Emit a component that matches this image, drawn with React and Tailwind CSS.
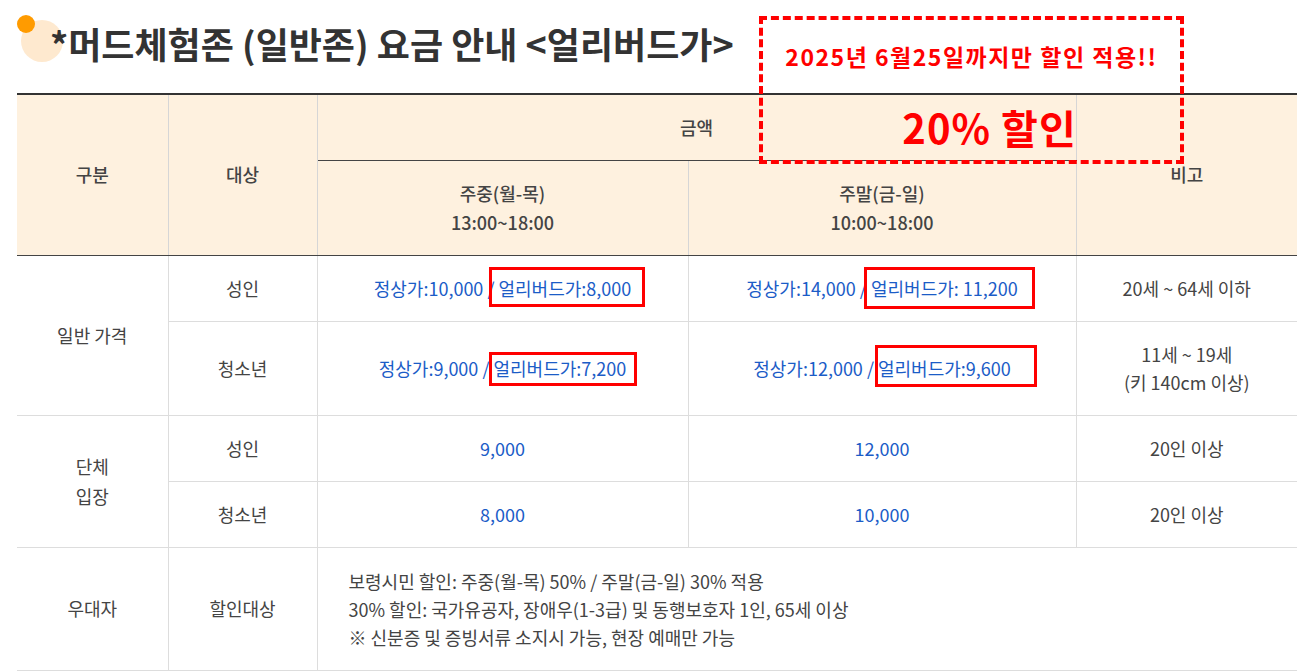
import React from "react";

const FONT = { fontFamily: '"Noto Sans CJK KR", "Noto Sans", sans-serif' };

// red frame drawn over the early-bird price, not affecting the text flow
function Early({ children, frame }) {
  return (
    <span className="relative inline-block leading-[18px]">
      {children}
      <span className={`pointer-events-none absolute border-[3px] border-[#ff0000] ${frame}`} />
    </span>
  );
}

export default function App() {
  const th = "border-x border-[#d6d6d6] font-medium text-[18px] text-[#444] bg-[#fef1df] align-middle text-center";
  const td = "border border-[#dddddd] text-[18px] align-middle text-center font-normal";
  const gray = "text-[#444]";
  const blue = "text-[#1b5cc7]";

  return (
    <div className="relative w-[1309px] h-[672px] bg-white overflow-hidden" style={FONT}>
      {/* title */}
      <div className="relative h-[93px] pl-[17px]">
        <div className="absolute left-[21px] top-[20px] h-[42px] w-[42px] rounded-full bg-[#fee9cf]" />
        <div className="absolute left-[17px] top-[15px] h-[18px] w-[18px] rounded-full bg-[#ff9b00]" />
        <h1 className="relative pl-[33px] pt-[17px] text-[36px] font-bold leading-[52px] text-[#333]">
          *머드체험존 (일반존) 요금 안내 &lt;얼리버드가&gt;
        </h1>
      </div>

      {/* table */}
      <div className="pl-[17px]">
        <table className="w-[1280px] table-fixed border-collapse">
          <colgroup>
            <col className="w-[151px]" />
            <col className="w-[149px]" />
            <col className="w-[371px]" />
            <col className="w-[388px]" />
            <col className="w-[221px]" />
          </colgroup>
          <thead className="border-t-2 border-[#333]">
            <tr className="h-[66px]">
              <th rowSpan={2} className={`${th} border-l-0 border-b border-b-[#444]`}>구분</th>
              <th rowSpan={2} className={`${th} border-b border-b-[#444]`}>대상</th>
              <th colSpan={2} className={`${th} border-b border-b-[#444]`}>금액</th>
              <th rowSpan={2} className={`${th} border-r-0 border-b border-b-[#444]`}>비고</th>
            </tr>
            <tr className="h-[95px]">
              <th className={`${th} border-b border-b-[#444] leading-[29px]`}>
                주중(월-목)
                <br />
                13:00~18:00
              </th>
              <th className={`${th} border-b border-b-[#444] leading-[29px]`}>
                주말(금-일)
                <br />
                10:00~18:00
              </th>
            </tr>
          </thead>
          <tbody>
            <tr className="h-[66px]">
              <td rowSpan={2} className={`${td} ${gray} border-l-0`}>일반 가격</td>
              <td className={`${td} ${gray}`}>성인</td>
              <td className={`${td} ${blue}`}>
                정상가:10,000 /{" "}
                <Early frame="-left-[10px] -right-[14px] -top-[12px] -bottom-[10px]">얼리버드가:8,000</Early>
              </td>
              <td className={`${td} ${blue}`}>
                정상가:14,000 /{" "}
                <Early frame="-left-[7px] -right-[17px] -top-[12px] -bottom-[12px]">얼리버드가: 11,200</Early>
              </td>
              <td className={`${td} ${gray} border-r-0`}>20세 ~ 64세 이하</td>
            </tr>
            <tr className="h-[94px]">
              <td className={`${td} ${gray}`}>청소년</td>
              <td className={`${td} ${blue}`}>
                정상가:9,000 /{" "}
                <Early frame="-left-[5px] -right-[11px] -top-[7px] -bottom-[9px]">얼리버드가:7,200</Early>
              </td>
              <td className={`${td} ${blue}`}>
                정상가:12,000 /{" "}
                <Early frame="-left-[3px] -right-[26px] -top-[14px] -bottom-[10px]">얼리버드가:9,600</Early>
              </td>
              <td className={`${td} ${gray} border-r-0 leading-[28px]`}>
                11세 ~ 19세
                <br />
                (키 140cm 이상)
              </td>
            </tr>
            <tr className="h-[66px]">
              <td rowSpan={2} className={`${td} ${gray} border-l-0 leading-[30px]`}>
                단체
                <br />
                입장
              </td>
              <td className={`${td} ${gray}`}>성인</td>
              <td className={`${td} ${blue}`}>9,000</td>
              <td className={`${td} ${blue}`}>12,000</td>
              <td className={`${td} ${gray} border-r-0`}>20인 이상</td>
            </tr>
            <tr className="h-[66px]">
              <td className={`${td} ${gray}`}>청소년</td>
              <td className={`${td} ${blue}`}>8,000</td>
              <td className={`${td} ${blue}`}>10,000</td>
              <td className={`${td} ${gray} border-r-0`}>20인 이상</td>
            </tr>
            <tr className="h-[123px]">
              <td className={`${td} ${gray} border-l-0`}>우대자</td>
              <td className={`${td} ${gray}`}>할인대상</td>
              <td colSpan={3} className={`${td} ${gray} border-r-0 pl-[31px] text-left leading-[28px]`}>
                보령시민 할인: 주중(월-목) 50% / 주말(금-일) 30% 적용
                <br />
                30% 할인: 국가유공자, 장애우(1-3급) 및 동행보호자 1인, 65세 이상
                <br />
                ※ 신분증 및 증빙서류 소지시 가능, 현장 예매만 가능
              </td>
            </tr>
          </tbody>
        </table>
      </div>

      {/* early-bird notice overlay */}
      <div className="absolute left-[759px] top-[16px] flex h-[148px] w-[425px] flex-col border-4 border-dashed border-[#ff0000]">
        <p className="pt-[20px] text-center text-[23px] font-bold leading-[32px] tracking-[1.5px] text-[#ff0000]">
          2025년 6월25일까지만 할인 적용!!
        </p>
        <p className="pt-[30px] pl-[36px] text-center text-[40px] font-bold leading-[50px] tracking-[1px] text-[#ff0000]">
          20% 할인
        </p>
      </div>
    </div>
  );
}
